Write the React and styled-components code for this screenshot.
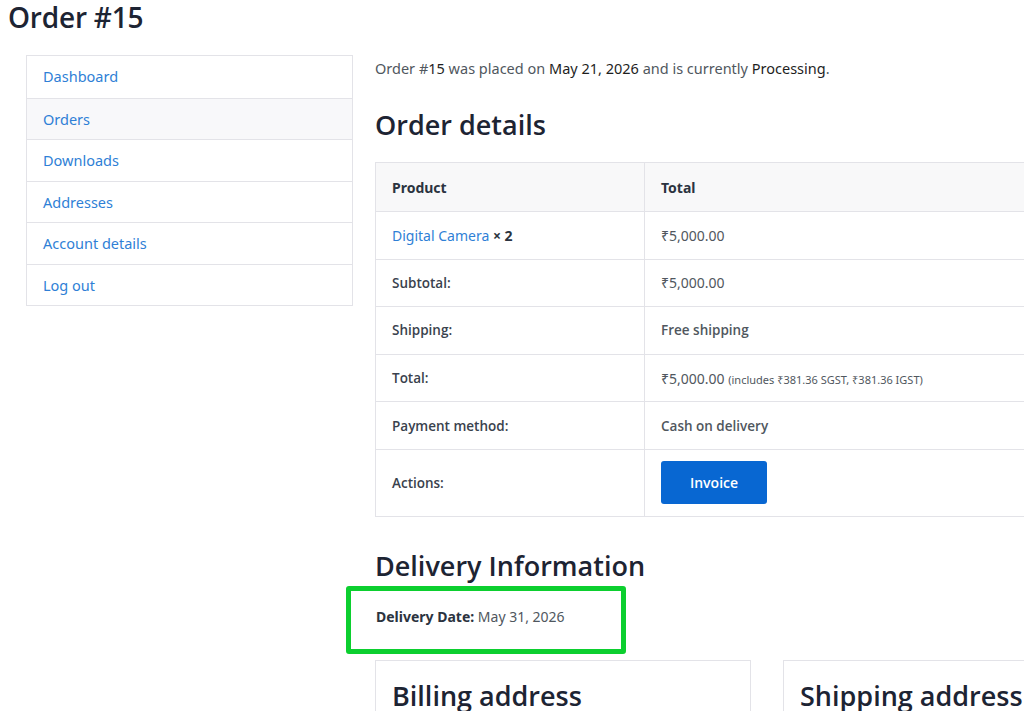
import React from "react";
import styled, { createGlobalStyle } from "styled-components";

const GlobalStyle = createGlobalStyle`
  html, body {
    margin: 0;
    padding: 0;
    background: #fff;
    overflow: hidden;
  }
  body {
    font-family: "Noto Sans", "Open Sans", sans-serif;
    font-size: 14px;
    color: #50575e;
  }
`;

const semibold = `"Open Sans", "Noto Sans", sans-serif`;

const Page = styled.div`
  width: 1180px;
  padding: 0 0 0 8px;
`;

const PageTitle = styled.h1`
  margin: 0;
  padding-top: 1px;
  font-family: ${semibold};
  font-size: 28px;
  line-height: 32px;
  font-weight: 600;
  color: #1d2433;
  letter-spacing: -0.2px;
`;

const Columns = styled.div`
  display: flex;
  align-items: flex-start;
  gap: 22px;
  margin-top: 22px;
  padding-left: 18px;
`;

const Nav = styled.nav`
  width: 327px;
  flex-shrink: 0;
  border: 1px solid #e3e3e8;
  box-sizing: border-box;
`;

const NavItem = styled.a`
  display: block;
  height: 41.5px;
  box-sizing: border-box;
  padding: 0 16px;
  line-height: 40px;
  font-size: 14.5px;
  color: #2f7fd6;
  text-decoration: none;
  background: ${(p) => (p.$active ? "#f8f8fa" : "#fff")};
  border-top: ${(p) => (p.$first ? "none" : "1px solid #e3e3e8")};
`;

const Content = styled.main`
  width: 784px;
  flex-shrink: 0;
`;

const Intro = styled.p`
  margin: 3px 0 0;
  font-size: 14.5px;
  line-height: 20px;
`;

const Mark = styled.span`
  color: #1e1e1e;
`;

const Heading = styled.h2`
  margin: ${(p) => p.$margin};
  font-family: ${semibold};
  font-size: 27px;
  line-height: 34px;
  font-weight: 600;
  color: #1d2433;
`;

const Table = styled.table`
  width: 100%;
  table-layout: fixed;
  border-collapse: collapse;
  border: 1px solid #e3e3e8;
  font-size: 14px;
`;

const Th = styled.th`
  text-align: left;
  height: 48px;
  padding: 0 16px;
  background: #f8f8f9;
  color: #2b3340;
  font-weight: 700;
  border: 1px solid #e3e3e8;
  width: ${(p) => p.$w || "auto"};
`;

const Td = styled.td`
  height: ${(p) => p.$h || "46.6px"};
  padding: 0 16px;
  border: 1px solid #e3e3e8;
  font-family: ${(p) => (p.$strong || p.$label ? semibold : "inherit")};
  font-size: ${(p) => (p.$strong || p.$label ? "13.5px" : "14px")};
  color: ${(p) => (p.$label ? "#3a424d" : "#50575e")};
  font-weight: ${(p) => (p.$strong || p.$label ? 600 : 400)};
`;

const Link = styled.a`
  color: #2f7fd6;
  text-decoration: none;
`;

const Qty = styled.strong`
  color: #2b3340;
  font-weight: 700;
`;

const Small = styled.small`
  font-family: "Noto Sans", sans-serif;
  font-weight: 400;
  font-size: 11px;
`;

const Button = styled.button`
  width: 106px;
  height: 43px;
  border: none;
  border-radius: 3px;
  background: #0867d2;
  color: #fff;
  font-family: ${semibold};
  font-size: 14px;
  font-weight: 600;
  cursor: pointer;
`;

const Highlight = styled.div`
  width: 280px;
  height: 68px;
  box-sizing: border-box;
  margin: 3px 0 0 -29px;
  border: 5px solid #0ccf2f;
  border-radius: 3px;
  padding: 16px 0 0 25px;
  font-size: 14px;
`;

const DateLabel = styled.strong`
  color: #2b3340;
  font-weight: 700;
`;

const Addresses = styled.div`
  display: grid;
  grid-template-columns: 1fr 1fr;
  gap: 32px;
  margin-top: 6px;
`;

const AddressCard = styled.section`
  border: 1px solid #e3e3e8;
  padding: 18px 16px;
  height: 200px;
`;

const AddressTitle = styled.h3`
  margin: 0;
  font-family: ${semibold};
  font-size: 27px;
  line-height: 34px;
  font-weight: 600;
  color: #1d2433;
`;

const navItems = ["Dashboard", "Orders", "Downloads", "Addresses", "Account details", "Log out"];

const rows = [
  { label: "Subtotal:", value: "₹5,000.00" },
  { label: "Shipping:", value: "Free shipping", strong: true },
  {
    label: "Total:",
    value: (
      <>
        ₹5,000.00 <Small>(includes ₹381.36 SGST, ₹381.36 IGST)</Small>
      </>
    ),
  },
  { label: "Payment method:", value: "Cash on delivery", strong: true },
];

export default function App() {
  return (
    <Page>
      <GlobalStyle />
      <PageTitle>Order #15</PageTitle>
      <Columns>
        <Nav>
          {navItems.map((item, i) => (
            <NavItem key={item} href="#" $first={i === 0} $active={item === "Orders"}>
              {item}
            </NavItem>
          ))}
        </Nav>
        <Content>
          <Intro>
            Order #<Mark>15</Mark> was placed on <Mark>May 21, 2026</Mark> and is currently{" "}
            <Mark>Processing</Mark>.
          </Intro>
          <Heading $margin="30px 0 20px">Order details</Heading>
          <Table>
            <thead>
              <tr>
                <Th $w="236px">Product</Th>
                <Th>Total</Th>
              </tr>
            </thead>
            <tbody>
              <tr>
                <Td>
                  <Link href="#">Digital Camera</Link> <Qty>× 2</Qty>
                </Td>
                <Td>₹5,000.00</Td>
              </tr>
              {rows.map((r) => (
                <tr key={r.label}>
                  <Td $label>{r.label}</Td>
                  <Td $strong={r.strong}>{r.value}</Td>
                </tr>
              ))}
              <tr>
                <Td $label $h="66px">Actions:</Td>
                <Td $h="66px">
                  <Button>Invoice</Button>
                </Td>
              </tr>
            </tbody>
          </Table>
          <Heading $margin="32px 0 0">Delivery Information</Heading>
          <Highlight>
            <DateLabel>Delivery Date:</DateLabel> May 31, 2026
          </Highlight>
          <Addresses>
            <AddressCard>
              <AddressTitle>Billing address</AddressTitle>
            </AddressCard>
            <AddressCard>
              <AddressTitle>Shipping address</AddressTitle>
            </AddressCard>
          </Addresses>
        </Content>
      </Columns>
    </Page>
  );
}
